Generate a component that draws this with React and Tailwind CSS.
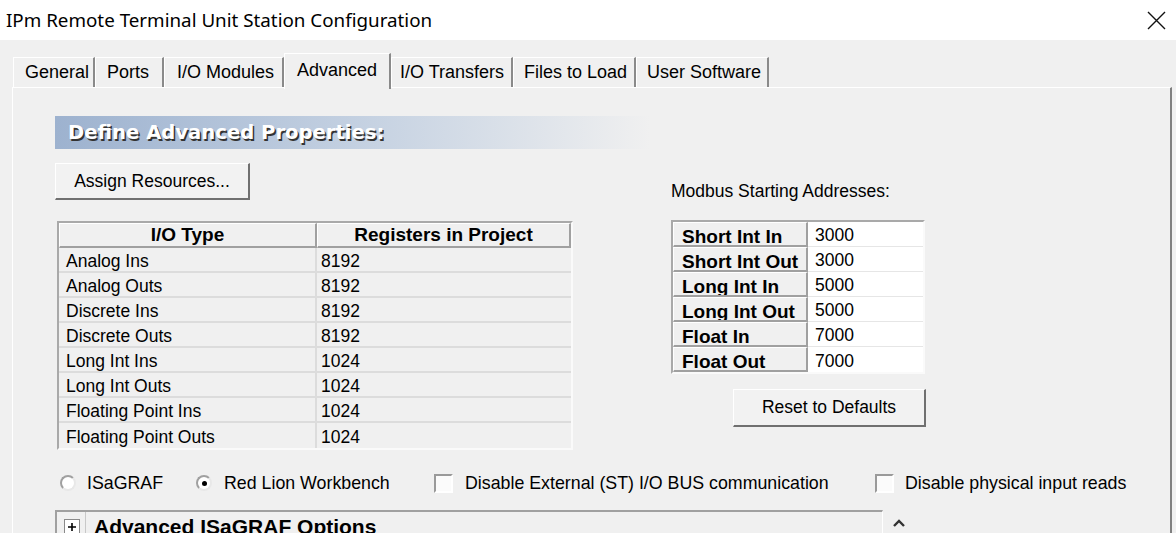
import React from "react";

const tabs = [
  { label: "General", w: 82, pl: 11 },
  { label: "Ports", w: 69, pl: 11 },
  { label: "I/O Modules", w: 120, pl: 12 },
  { label: "Advanced", w: 107, pl: 12, active: true },
  { label: "I/O Transfers", w: 122, pl: 8 },
  { label: "Files to Load", w: 123, pl: 10 },
  { label: "User Software", w: 133, pl: 10 },
];

const ioRows = [
  ["Analog Ins", "8192"],
  ["Analog Outs", "8192"],
  ["Discrete Ins", "8192"],
  ["Discrete Outs", "8192"],
  ["Long Int Ins", "1024"],
  ["Long Int Outs", "1024"],
  ["Floating Point Ins", "1024"],
  ["Floating Point Outs", "1024"],
];

const modbusRows = [
  ["Short Int In", "3000"],
  ["Short Int Out", "3000"],
  ["Long Int In", "5000"],
  ["Long Int Out", "5000"],
  ["Float In", "7000"],
  ["Float Out", "7000"],
];

function Radio({ checked }) {
  return (
    <span className="w-[16px] h-[16px] rounded-full border-2 border-t-[#a0a0a0] border-l-[#a0a0a0] border-r-[#e8e8e8] border-b-[#e8e8e8] bg-white flex items-center justify-center shrink-0">
      {checked && <span className="w-[5px] h-[5px] rounded-full bg-black" />}
    </span>
  );
}

function Check() {
  return (
    <span className="w-[19px] h-[19px] border-2 border-t-[#9a9a9a] border-l-[#9a9a9a] border-r-[#ffffff] border-b-[#ffffff] bg-[#fbfbfb] shrink-0" />
  );
}

export default function App() {
  return (
    <div className="w-[1176px] h-[533px] overflow-hidden bg-[#f0f0f0] font-['Liberation_Sans',Arial,sans-serif] text-black">
      {/* Title bar */}
      <div className="h-[40px] bg-white flex items-center justify-between pl-[6px] pr-[10px]">
        <span className="font-['Noto_Sans',sans-serif] text-[18.8px] leading-none">
          IPm Remote Terminal Unit Station Configuration
        </span>
        <svg width="19" height="19" viewBox="0 0 19 19">
          <path d="M1 1L18 18M18 1L1 18" stroke="#111" strokeWidth="1.4" />
        </svg>
      </div>

      {/* Tabs */}
      <div className="flex items-end pl-[13px] h-[47px]">
        {tabs.map((t) =>
          t.active ? (
            <div
              key={t.label}
              style={{ width: t.w }}
              className="relative z-10 -mb-[2px] h-[36px] bg-[#f0f0f0] border-t border-l border-white border-r-2 border-r-[#8a8a8a] flex items-start pt-[3px] text-[18px]"
            >
              <span style={{ paddingLeft: t.pl }}>{t.label}</span>
            </div>
          ) : (
            <div
              key={t.label}
              style={{ width: t.w }}
              className="h-[30px] border-t border-l border-white border-r-2 border-r-[#8a8a8a] flex items-center text-[18px]"
            >
              <span style={{ paddingLeft: t.pl }}>{t.label}</span>
            </div>
          )
        )}
      </div>

      {/* Panel */}
      <div className="ml-[12px] w-[1160px] h-[446px] border-t border-l border-white border-r-2 border-r-[#808080] pl-[42px] pt-[28px]">
        <div className="flex">
          {/* Left column */}
          <div className="w-[595px]">
            <div className="h-[33px] bg-gradient-to-r from-[#9db2cf] via-[#c3d0e1] to-[#f0f0f0] flex items-center pl-[13px]">
              <span className="font-['DejaVu_Sans',Verdana,sans-serif] font-bold text-[19.6px] text-white [text-shadow:1.5px_1.5px_0_#333]">
                Define Advanced Properties:
              </span>
            </div>
            <button className="mt-[14px] w-[195px] h-[37px] bg-[#f2f2f2] border border-t-white border-l-white border-r-2 border-b-2 border-r-[#707070] border-b-[#707070] text-[17.5px] flex items-center justify-center">
              Assign Resources...
            </button>
            <div className="mt-[21px] ml-[2px] w-[516px] border-t-2 border-l-2 border-t-[#a9a9a9] border-l-[#a9a9a9] border-r-2 border-b-2 border-r-[#fafafa] border-b-[#fafafa]">
              <div className="flex h-[25px]">
                <div className="w-[258px] border-t border-l border-white border-b-2 border-r-2 border-b-[#a0a0a0] border-r-[#a0a0a0] flex items-center justify-center font-bold text-[19px]">
                  I/O Type
                </div>
                <div className="flex-1 border-t border-l border-white border-b-2 border-r-2 border-b-[#a0a0a0] border-r-[#a0a0a0] flex items-center justify-center font-bold text-[19px]">
                  Registers in Project
                </div>
              </div>
              {ioRows.map(([a, b], i) => (
                <div key={a} className="flex h-[25px]">
                  <div className={`w-[258px] border-r-2 border-r-[#dcdcdc] flex items-center pl-[7px] pt-[3px] text-[17.5px] ${i < ioRows.length - 1 ? "border-b-2 border-b-[#dcdcdc]" : ""}`}>
                    {a}
                  </div>
                  <div className={`flex-1 flex items-center pl-[4px] pt-[3px] text-[17.5px] ${i < ioRows.length - 1 ? "border-b-2 border-b-[#dcdcdc]" : ""}`}>
                    {b}
                  </div>
                </div>
              ))}
            </div>
          </div>

          {/* Right column */}
          <div className="ml-[21px] pt-[64px]">
            <div className="text-[17.5px] leading-[22px]">Modbus Starting Addresses:</div>
            <div className="mt-[18px] w-[254px] border-t-2 border-l-2 border-t-[#a9a9a9] border-l-[#a9a9a9] border-r-2 border-b-2 border-r-[#fafafa] border-b-[#fafafa]">
              {modbusRows.map(([a, b], i) => (
                <div key={a} className="flex h-[25px]">
                  <div className="w-[135px] border-t border-l border-white border-b-2 border-r-2 border-b-[#a0a0a0] border-r-[#a0a0a0] pl-[8px] pt-[3px] font-bold text-[19px] leading-[22px] overflow-hidden">
                    {a}
                  </div>
                  <div className={`flex-1 bg-white flex items-center pl-[7px] pt-[3px] text-[17.5px] ${i < modbusRows.length - 1 ? "border-b border-b-[#e6e6e6]" : ""}`}>
                    {b}
                  </div>
                </div>
              ))}
            </div>
            <button className="mt-[15px] ml-[62px] w-[193px] h-[38px] bg-[#f2f2f2] border border-t-white border-l-white border-r-2 border-b-2 border-r-[#707070] border-b-[#707070] text-[17.5px] flex items-center justify-center">
              Reset to Defaults
            </button>
          </div>
        </div>

        {/* Options row */}
        <div className="mt-[22px] flex items-center h-[22px] text-[17.8px]">
          <div className="w-[141px] pl-[5px] flex items-center gap-[11px]">
            <Radio />
            <span>ISaGRAF</span>
          </div>
          <div className="w-[238px] flex items-center gap-[12px]">
            <Radio checked />
            <span>Red Lion Workbench</span>
          </div>
          <div className="w-[441px] flex items-center gap-[12px]">
            <Check />
            <span>Disable External (ST) I/O BUS communication</span>
          </div>
          <div className="flex items-center gap-[11px]">
            <Check />
            <span>Disable physical input reads</span>
          </div>
        </div>

        {/* Advanced ISaGRAF options */}
        <div className="mt-[16px] flex items-start">
          <div className="w-[828px] h-[40px] border-t-2 border-l-2 border-[#a0a0a0] border-r border-r-white flex items-start">
            <div className="ml-[7px] mt-[7px] w-[16px] h-[16px] border border-[#8a8a8a] bg-white flex items-center justify-center">
              <svg width="10" height="10" viewBox="0 0 10 10">
                <path d="M1 5H9M5 1V9" stroke="#000" strokeWidth="1.6" />
              </svg>
            </div>
            <div className="ml-[5px] w-[1px] h-[40px] bg-[#c8c8c8]" />
            <span className="ml-[8px] mt-[2px] font-bold text-[21px] leading-[26px]">Advanced ISaGRAF Options</span>
          </div>
          <svg className="ml-[9px] mt-[8px]" width="14" height="10" viewBox="0 0 14 10">
            <path d="M2 8L7 3L12 8" fill="none" stroke="#333" strokeWidth="2.4" />
          </svg>
        </div>
      </div>
    </div>
  );
}
